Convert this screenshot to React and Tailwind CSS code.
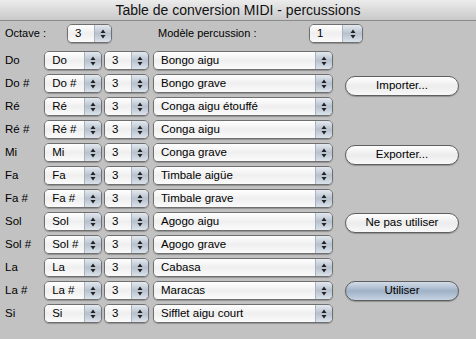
import React from 'react'

const rows = [
  ['Do', 'Do', 'Bongo aigu'],
  ['Do #', 'Do #', 'Bongo grave'],
  ['Ré', 'Ré', 'Conga aigu étouffé'],
  ['Ré #', 'Ré #', 'Conga aigu'],
  ['Mi', 'Mi', 'Conga grave'],
  ['Fa', 'Fa', 'Timbale aigüe'],
  ['Fa #', 'Fa #', 'Timbale grave'],
  ['Sol', 'Sol', 'Agogo aigu'],
  ['Sol #', 'Sol #', 'Agogo grave'],
  ['La', 'La', 'Cabasa'],
  ['La #', 'La #', 'Maracas'],
  ['Si', 'Si', 'Sifflet aigu court'],
]

function Arrows() {
  return (
    <svg width="6" height="10" viewBox="0 0 6 10">
      <path d="M3 0.5 L5.5 4 L0.5 4 Z" fill="#222" />
      <path d="M3 9.5 L5.5 6 L0.5 6 Z" fill="#222" />
    </svg>
  )
}

function Popup({ value, width, arrowW = 17 }) {
  return (
    <div
      className="flex h-[19px] shrink-0 overflow-hidden rounded-[5px] border border-[#6f6f6f] shadow-[0_1px_1px_rgba(0,0,0,0.25)]"
      style={{ width }}
    >
      <div className="flex flex-1 items-center bg-gradient-to-b from-[#ffffff] via-[#efefef] to-[#fbfbfb] pl-[7px] text-[11.5px] leading-none text-black">
        {value}
      </div>
      <div
        className="flex items-center justify-center border-l border-[#a9b2bd] bg-gradient-to-b from-[#e4e9ef] via-[#b7c2cf] to-[#dbe2ea]"
        style={{ width: arrowW }}
      >
        <Arrows />
      </div>
    </div>
  )
}

function Button({ children, primary }) {
  return (
    <button
      type="button"
      className={
        'flex h-[20px] w-[114px] items-center justify-center rounded-full border border-[#5f5f5f] text-[11.5px] leading-none text-black shadow-[0_1px_1px_rgba(0,0,0,0.25)] ' +
        (primary
          ? 'bg-gradient-to-b from-[#d3dde9] via-[#9fb1c6] to-[#c6d3e2]'
          : 'bg-gradient-to-b from-[#ffffff] via-[#ececec] to-[#f8f8f8]')
      }
    >
      {children}
    </button>
  )
}

export default function App() {
  return (
    <div
      className="flex h-[339px] w-[476px] flex-col overflow-hidden bg-[#c2c2c2] text-black"
      style={{ fontFamily: '"Liberation Sans", Arial, sans-serif' }}
    >
      <div className="flex h-[21px] shrink-0 items-center justify-center border-b border-[#8c8c8c] bg-gradient-to-b from-[#ececec] to-[#c9c9c9] text-[14px] text-[#111]">
        Table de conversion MIDI - percussions
      </div>

      <div className="mt-[3px] flex h-[19px] items-center text-[11px]">
        <span className="w-[67px] pl-[5px]">Octave :</span>
        <Popup value="3" width={45} />
        <span className="ml-[46px] w-[151px]">Modèle percussion :</span>
        <Popup value="1" width={54} arrowW={20} />
      </div>

      <div className="mt-[8px] flex">
        <div className="flex w-[333px] flex-col gap-[4px]">
          {rows.map(([label, note, inst]) => (
            <div key={label} className="flex h-[19px] items-center">
              <span className="w-[45px] pl-[5px] text-[11.5px]">{label}</span>
              <Popup value={note} width={58} />
              <div className="w-[2px]" />
              <Popup value="3" width={45} />
              <div className="w-[4px]" />
              <Popup value={inst} width={180} />
            </div>
          ))}
        </div>
        <div className="flex flex-col pl-[12px] pt-[25px]">
          <Button>Importer...</Button>
          <div className="h-[49px]" />
          <Button>Exporter...</Button>
          <div className="h-[48px]" />
          <Button>Ne pas utiliser</Button>
          <div className="h-[48px]" />
          <Button primary>Utiliser</Button>
        </div>
      </div>
    </div>
  )
}
